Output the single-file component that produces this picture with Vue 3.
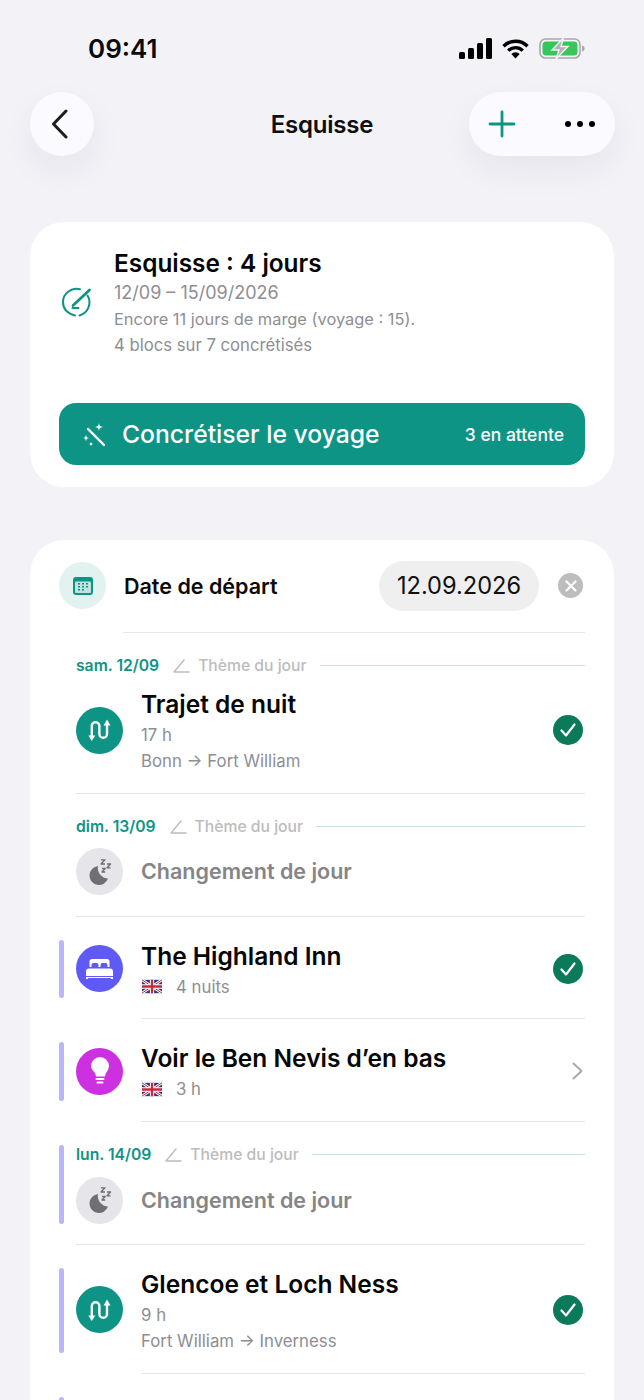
<script setup>
const rows = [
  { id: 1, first: true, day: 'sam. 12/09', kind: 'route', title: 'Trajet de nuit', subs: ['17 h', 'Bonn → Fort William'], end: 'check', sep: 'wide' },
  { id: 2, day: 'dim. 13/09', kind: 'sleep', title: 'Changement de jour', muted: true, subs: [], sep: 'wide' },
  { id: 3, bar: true, kind: 'bed', title: 'The Highland Inn', flag: '4 nuits', subs: [], end: 'check', sep: 'inset' },
  { id: 4, bar: true, kind: 'idea', title: 'Voir le Ben Nevis d’en bas', flag: '3 h', subs: [], end: 'chevron', sep: 'inset' },
  { id: 5, bar: true, day: 'lun. 14/09', kind: 'sleep', title: 'Changement de jour', muted: true, subs: [], sep: 'wide' },
  { id: 6, bar: true, kind: 'route', title: 'Glencoe et Loch Ness', subs: ['9 h', 'Fort William → Inverness'], end: 'check', sep: 'inset' }
]
</script>

<template>
  <div class="page">
    <div class="status">
      <span class="time">09:41</span>
      <div class="status-icons">
        <svg width="33" height="21" viewBox="0 0 33 21"><rect x="0" y="14" width="6" height="7" rx="1.5"/><rect x="9" y="10" width="6" height="11" rx="1.5"/><rect x="18" y="5" width="6" height="16" rx="1.5"/><rect x="27" y="0" width="6" height="21" rx="1.5"/></svg>
        <svg width="27" height="20" viewBox="0 0 27 20"><path d="M1.5 7.2a17 17 0 0 1 24 0" fill="none" stroke="#000" stroke-width="3.4"/><path d="M6.2 11.6a10.4 10.4 0 0 1 14.6 0" fill="none" stroke="#000" stroke-width="3.4"/><path d="M13.5 19.5 9.3 14.9a6 6 0 0 1 8.4 0z"/></svg>
        <svg width="46" height="21" viewBox="0 0 46 21"><rect x="1" y="1" width="40" height="19" rx="5.5" fill="none" stroke="#a9a9ad" stroke-width="1.6"/><rect x="3.5" y="3.5" width="35" height="14" rx="3.5" fill="#35c759"/><path d="M43 7.5c1.8.4 2.6 1.6 2.6 3s-.8 2.6-2.6 3z" fill="#a9a9ad"/><path d="M24.5 0 13 12h7l-3 9 12-12.5h-7z" fill="#b4b4b8" stroke="#f2f2f7" stroke-width="1.4"/></svg>
      </div>
    </div>

    <header class="nav">
      <button class="glass back" aria-label="Retour">
        <svg width="20" height="30" viewBox="0 0 20 30"><path d="M16 2 3.5 15 16 28" fill="none" stroke="#1c1c1e" stroke-width="3" stroke-linecap="round" stroke-linejoin="round"/></svg>
      </button>
      <h1 class="nav-title">Esquisse</h1>
      <div class="glass actions">
        <svg width="28" height="28" viewBox="0 0 28 28"><path d="M14 2v24M2 14h24" stroke="#0d9485" stroke-width="2.8" stroke-linecap="round"/></svg>
        <svg width="32" height="8" viewBox="0 0 32 8"><circle cx="4" cy="4" r="3"/><circle cx="16" cy="4" r="3"/><circle cx="28" cy="4" r="3"/></svg>
      </div>
    </header>

    <section class="card summary">
      <div class="summary-top">
        <svg class="summary-icon" width="33" height="33" viewBox="0 0 33 33" fill="none" stroke="#0d9485" stroke-width="2" stroke-linecap="round" stroke-linejoin="round">
          <path d="M20 3.200A13.500 13.500 0 0 0 3 16c0 6.500 4.500 11.500 12 13.500"/>
          <path d="M27.500 9.500a13.500 13.500 0 0 1-8 20"/>
          <path d="M29.500 4 13 19.500" stroke-width="2.800"/>
          <path d="M12.500 22h6"/>
        </svg>
        <div class="summary-text">
          <h2>Esquisse : 4 jours</h2>
          <p class="dates">12/09 – 15/09/2026</p>
          <p>Encore 11 jours de marge (voyage : 15).</p>
          <p class="blocs">4 blocs sur 7 concrétisés</p>
        </div>
      </div>
      <button class="cta">
        <svg width="26" height="26" viewBox="0 0 26 26" fill="#fff"><path d="M8 8 24 24" stroke="#fff" stroke-width="2.400" stroke-linecap="round"/><path d="M19 2c.4 2.800 1.200 3.600 4 4-2.800.4-3.600 1.200-4 4-.4-2.800-1.200-3.600-4-4 2.800-.4 3.600-1.200 4-4zM6 13.500c.3 2.300.9 3.200 3.300 3.500-2.400.3-3 1.200-3.300 3.500-.3-2.300-.9-3.200-3.300-3.500 2.400-.3 3-1.200 3.300-3.500zM11 20.500c.2 1.700.7 2.300 2.400 2.500-1.700.2-2.200.8-2.400 2.500-.2-1.700-.7-2.300-2.400-2.500 1.700-.2 2.200-.8 2.400-2.500z"/></svg>
        <span class="cta-label">Concrétiser le voyage</span>
        <span class="cta-count">3 en attente</span>
      </button>
    </section>

    <section class="card plan">
      <div class="date-row">
        <span class="date-icon">
          <svg width="20" height="18" viewBox="0 0 20 18"><rect width="20" height="18" rx="3" fill="#0d9485"/><rect x="2" y="4.500" width="16" height="11.500" rx="1" fill="#bfe3de"/><g fill="#0d9485"><rect x="5" y="6" width="2" height="1.500"/><rect x="9" y="6" width="2" height="1.500"/><rect x="13" y="6" width="2" height="1.500"/><rect x="5" y="9" width="2" height="1.500"/><rect x="9" y="9" width="2" height="1.500"/><rect x="13" y="9" width="2" height="1.500"/><rect x="5" y="12" width="2" height="1.500"/><rect x="9" y="12" width="2" height="1.500"/></g></svg>
        </span>
        <span class="date-label">Date de départ</span>
        <span class="date-pill">12.09.2026</span>
        <span class="date-clear">
          <svg width="12" height="12" viewBox="0 0 12 12"><path d="M1.500 1.500l9 9M10.500 1.500l-9 9" stroke="#fff" stroke-width="2.200" stroke-linecap="round"/></svg>
        </span>
      </div>

      <article v-for="r in rows" :key="r.id" class="row" :class="{ first: r.first }">
        <span class="bar" :class="{ on: r.bar }"></span>
        <div class="row-body" :class="r.sep">
          <div v-if="r.day" class="day">
            <span class="day-date">{{ r.day }}</span>
            <svg width="17" height="15" viewBox="0 0 17 15" fill="none" stroke="#bcbcbc" stroke-width="1.400" stroke-linecap="round"><path d="M1 14 11 2M1 14h15"/></svg>
            <span class="day-theme">Thème du jour</span>
            <span class="day-line"></span>
          </div>
          <div class="main">
            <span class="badge" :class="r.kind">
              <svg v-if="r.kind === 'route'" width="24" height="24" viewBox="0 0 24 24" fill="none" stroke="#fff" stroke-width="2.400" stroke-linecap="round"><path d="M3.800 18V8a3.800 3.800 0 0 1 7.600 0v8a3.800 3.800 0 0 0 7.600 0V6"/><path d="M.3 17.500H7.300L3.800 23zM15.500 7.500l3.500-6 3.500 6z" fill="#fff" stroke="none"/></svg>
              <svg v-else-if="r.kind === 'sleep'" width="24" height="26" viewBox="0 0 24 26"><path d="M10 7a9.500 9.500 0 1 0 10 12.500A10.500 10.500 0 0 1 10 7z" fill="#6f6f74"/><path d="M13 .8h4L13 5h4M19 5h3.600L19 8.800h3.600M14 9.500h3.200L14 13h3.200" fill="none" stroke="#6f6f74" stroke-width="1.300" stroke-linejoin="round"/></svg>
              <svg v-else-if="r.kind === 'bed'" width="27" height="20" viewBox="0 0 27 20" fill="#fff"><path d="M3.500 2.500A2.500 2.500 0 0 1 6 0h15a2.500 2.500 0 0 1 2.500 2.500V8h-2V6a2 2 0 0 0-2-2h-3a2 2 0 0 0-2 2v2h-2V6a2 2 0 0 0-2-2h-3a2 2 0 0 0-2 2v2h-2z"/><path d="M3 9.500h21a3 3 0 0 1 3 3V17H0v-4.500a3 3 0 0 1 3-3zM0 18h27v1a1 1 0 0 1-2 .500l-.5-.5h-22l-.5.5a1 1 0 0 1-2-.5z"/></svg>
              <svg v-else width="18" height="28" viewBox="0 0 18 28" fill="#fff"><path d="M9 0a9 9 0 0 1 9 9c0 3.500-2.200 5.500-3.200 7.500-.5 1-.6 2-.8 3H5c-.2-1-.3-2-.8-3C3.200 14.500 0 12.500 0 9a9 9 0 0 1 9-9z"/><rect x="4.500" y="21" width="9" height="2" rx="1"/><rect x="5.500" y="24.500" width="7" height="2" rx="1"/></svg>
            </span>
            <div class="info">
              <h3 :class="{ muted: r.muted }">{{ r.title }}</h3>
              <p v-if="r.flag" class="flagline">
                <svg width="20" height="15" viewBox="0 0 60 40"><rect width="60" height="40" fill="#2b3a78"/><path d="M0 0 60 40M60 0 0 40" stroke="#fff" stroke-width="8"/><path d="M0 0 60 40M60 0 0 40" stroke="#c8283e" stroke-width="3"/><path d="M30 0v40M0 20h60" stroke="#fff" stroke-width="13"/><path d="M30 0v40M0 20h60" stroke="#c8283e" stroke-width="7"/></svg>
                <span>{{ r.flag }}</span>
              </p>
              <p v-for="s in r.subs" :key="s">{{ s }}</p>
            </div>
            <span v-if="r.end === 'check'" class="check">
              <svg width="16" height="14" viewBox="0 0 16 14"><path d="M1.500 7.500 6 12.500 14.500 1.500" fill="none" stroke="#fff" stroke-width="2.200" stroke-linecap="round" stroke-linejoin="round"/></svg>
            </span>
            <svg v-else-if="r.end === 'chevron'" class="chev" width="11" height="18" viewBox="0 0 11 18"><path d="M1.500 1.500 9.500 9l-8 7.500" fill="none" stroke="#a9a9ad" stroke-width="2" stroke-linecap="round" stroke-linejoin="round"/></svg>
          </div>
        </div>
      </article>

      <div class="row tail"><span class="bar on"></span></div>
    </section>
  </div>
</template>

<style>
html, body { margin: 0; background: #f2f2f7; }
</style>

<style scoped>
* { box-sizing: border-box; }
h1, h2, h3, p { margin: 0; font: inherit; }
button { border: 0; font: inherit; padding: 0; }
.page { width: 644px; height: 1400px; overflow: hidden; background: #f2f2f7; font-family: Inter, "Noto Sans", sans-serif; color: #000; padding: 0 30px; }

.status { height: 92px; display: flex; justify-content: space-between; align-items: flex-start; padding: 33px 29px 0 58px; }
.time { font-size: 26px; line-height: 32px; font-weight: 600; color: #0a0a0a; }
.status-icons { display: flex; align-items: center; gap: 10px; padding-top: 5px; }

.nav { display: grid; grid-template-columns: 1fr auto 1fr; align-items: center; height: 64px; }
.glass { background: #fbfaff; height: 64px; box-shadow: 0 14px 34px rgba(40, 40, 70, 0.06); display: flex; align-items: center; }
.back { width: 64px; border-radius: 50%; justify-content: center; padding-right: 4px; }
.nav-title { font-size: 24px; font-weight: 600; color: #0e0e10; letter-spacing: -0.2px; }
.actions { width: 146px; border-radius: 32px; padding: 0 19px; justify-content: space-between; justify-self: end; margin-right: -1px; }

.card { background: #fff; border-radius: 34px; }
.summary { margin-top: 66px; height: 265px; padding: 25px 29px 0; }
.summary-top { display: flex; align-items: center; gap: 21px; }
.summary-icon { flex: none; margin-left: 1px; }
.summary-text { color: #8e8e93; font-size: 16.400px; line-height: 26px; }
.summary-text h2 { font-size: 24.400px; line-height: 32px; font-weight: 600; color: #050505; margin-bottom: 1px; }
.summary-text .dates { font-size: 18px; }
.summary-text .blocs { font-size: 16.700px; }
.cta { margin-top: 45px; width: 526px; height: 62px; border-radius: 17px; background: #0d9485; color: #fff; display: flex; align-items: center; padding: 0 21px; }
.cta-label { font-size: 24.700px; font-weight: 500; margin-left: 16px; flex: 1; text-align: left; }
.cta-count { font-size: 17.500px; font-weight: 500; }

.plan { margin-top: 53px; height: 1000px; padding: 0 29px 0 0; }
.date-row { height: 93px; margin-left: 29px; padding-bottom: 2px; display: flex; align-items: center; position: relative; }
.date-row::after { content: ""; position: absolute; left: 64px; right: 0; bottom: 0; height: 1px; background: #e6e6e8; }
.date-icon { width: 47px; height: 47px; border-radius: 50%; background: #e1f2f0; display: flex; align-items: center; justify-content: center; flex: none; }
.date-label { font-size: 21.500px; font-weight: 600; margin-left: 18px; flex: 1; color: #0a0a0a; }
.date-pill { width: 160px; height: 50px; border-radius: 25px; background: #efefef; font-size: 23.600px; display: flex; align-items: center; justify-content: center; color: #111; }
.date-clear { width: 25px; height: 25px; border-radius: 50%; background: #bdbdbd; margin-left: 19px; margin-right: 2px; display: flex; align-items: center; justify-content: center; }

.row { display: flex; margin-left: 29px; }
.bar { width: 5px; flex: none; margin: 23px 12px 21px 0; border-radius: 3px; background: transparent; }
.bar.on { background: #bbb6fb; }
.row-body { flex: 1; min-width: 0; padding: 22.800px 0 20.600px; border-bottom: 1px solid #e6e6e8; }
.row.first .row-body { padding-top: 22px; }
.row-body.inset { border-bottom: 0; position: relative; padding-bottom: 21.600px; }
.row-body.inset::after { content: ""; position: absolute; left: 65px; right: 0; bottom: 0; height: 1px; background: #e6e6e8; }

.day { display: flex; align-items: center; height: 20px; margin-bottom: 12px; font-size: 15.700px; }
.row.first .day { margin-bottom: 13px; }
.day-date { color: #0d9485; font-weight: 600; margin-right: 14px; }
.day-theme { color: #bcbcbc; font-weight: 500; margin: 0 13px 0 8px; }
.day-line { flex: 1; height: 1px; background: #c2e3de; }

.main { display: flex; align-items: center; }
.badge { width: 47px; height: 47px; border-radius: 50%; flex: none; display: flex; align-items: center; justify-content: center; margin-right: 18px; }
.badge.route { background: #0d9485; }
.badge.sleep { background: #e5e5ea; }
.badge.bed { background: #5f5af5; }
.badge.idea { background: #cc30e0; }
.info { flex: 1; min-width: 0; font-size: 16.800px; line-height: 26px; color: #8e8e93; padding-top: 2px; margin-bottom: -2px; }
.info h3 { font-size: 24.500px; line-height: 32px; font-weight: 600; color: #060606; margin: -2px 0 2px; }
.info h3.muted { font-size: 21.500px; line-height: 47px; color: #858587; margin: -2px 0 2px; }
.flagline { display: flex; align-items: center; gap: 14px; padding-left: 1px; }
.check { width: 30px; height: 30px; border-radius: 50%; background: #0b7a5b; display: flex; align-items: center; justify-content: center; margin-right: 2px; }
.chev { margin-right: 2px; }
.tail { height: 40px; }
.tail .bar { margin-bottom: 0; }
</style>
